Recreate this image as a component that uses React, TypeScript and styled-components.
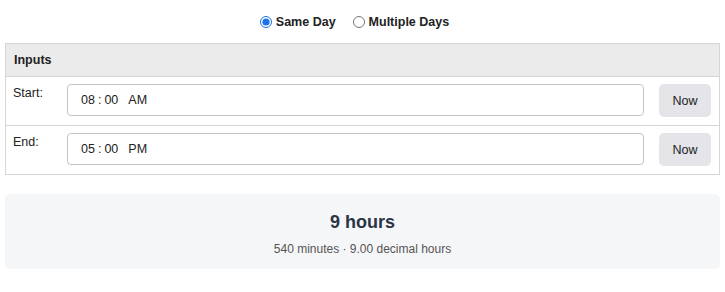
import { FC, useState } from "react";
import styled, { createGlobalStyle } from "styled-components";

const GlobalStyle = createGlobalStyle`
    body {
        margin: 0;
        background: #ffffff;
        font-family: "Liberation Sans", Arial, sans-serif;
        color: #222;
    }
`
const Page = styled.main`
    display: flex;
    flex-direction: column;
    padding: 0 5px 0 5px;
    width: 715px;
`
const ModeRow = styled.div`
    display: flex;
    justify-content: center;
    align-items: center;
    gap: 17px;
    height: 43px;
    padding-right: 16px;
`
const ModeLabel = styled.label`
    display: flex;
    align-items: center;
    gap: 4px;
    font-size: 12.5px;
    font-weight: bold;
    color: #222;
    cursor: pointer;

    input {
        margin: 0;
        width: 12px;
        height: 12px;
        accent-color: #1a73e8;
    }
`
const Table = styled.div`
    display: flex;
    flex-direction: column;
    border: 1px solid #d6d6d6;
`
const HeaderRow = styled.div`
    display: flex;
    align-items: center;
    height: 32px;
    padding-left: 8px;
    background-color: #ebebeb;
    border-bottom: 1px solid #d6d6d6;
    font-size: 12.5px;
    font-weight: bold;
    color: #222;
`
const Row = styled.div<{ $last?: boolean }>`
    display: grid;
    grid-template-columns: 53px 1fr 68px;
    height: 48px;
    border-bottom: ${(p) => (p.$last ? "none" : "1px solid #d6d6d6")};
`
const RowLabel = styled.div`
    padding: 9px 0 0 7px;
    font-size: 12.5px;
    color: #222;
`
const InputCell = styled.div`
    padding: 7px 7px 0 8px;
`
const TimeBox = styled.div`
    display: flex;
    align-items: center;
    height: 32px;
    padding-left: 13px;
    border: 1px solid #c4c4c4;
    border-radius: 4px;
    background: #fff;
    font-size: 12.5px;
    color: #222;
    box-sizing: border-box;
`
const Colon = styled.span`
    padding: 0 3px;
`
const Meridiem = styled.span`
    margin-left: 10px;
`
const ButtonCell = styled.div`
    padding: 7px 0 0 8px;
`
const NowButton = styled.button`
    width: 52px;
    height: 33px;
    border: none;
    border-radius: 5px;
    background-color: #e4e4e9;
    font-family: "Liberation Sans", Arial, sans-serif;
    font-size: 12.5px;
    color: #222;
    cursor: pointer;
`
const Result = styled.section`
    display: flex;
    flex-direction: column;
    align-items: center;
    margin-top: 19px;
    height: 75px;
    border-radius: 5px;
    background-color: #f5f6f8;
    box-sizing: border-box;
    padding-top: 18px;
`
const ResultMain = styled.div`
    font-size: 18px;
    font-weight: bold;
    color: #2b3445;
`
const ResultSub = styled.div`
    margin-top: 9px;
    font-size: 12px;
    color: #555;
`

const times = [
    { label: "Start:", hh: "08", mm: "00", ap: "AM" },
    { label: "End:", hh: "05", mm: "00", ap: "PM" },
];

const App: FC = () => {
    const [mode, setMode] = useState<string>("same");

    return (
        <Page>
            <GlobalStyle />
            <ModeRow>
                <ModeLabel>
                    <input type="radio" name="mode" checked={mode === "same"} onChange={() => setMode("same")} />
                    Same Day
                </ModeLabel>
                <ModeLabel>
                    <input type="radio" name="mode" checked={mode === "multi"} onChange={() => setMode("multi")} />
                    Multiple Days
                </ModeLabel>
            </ModeRow>

            <Table>
                <HeaderRow>Inputs</HeaderRow>
                {times.map((t, i) => (
                    <Row key={t.label} $last={i === times.length - 1}>
                        <RowLabel>{t.label}</RowLabel>
                        <InputCell>
                            <TimeBox>
                                {t.hh}<Colon>:</Colon>{t.mm}<Meridiem>{t.ap}</Meridiem>
                            </TimeBox>
                        </InputCell>
                        <ButtonCell>
                            <NowButton>Now</NowButton>
                        </ButtonCell>
                    </Row>
                ))}
            </Table>

            <Result>
                <ResultMain>9 hours</ResultMain>
                <ResultSub>540 minutes · 9.00 decimal hours</ResultSub>
            </Result>
        </Page>
    )
}

export default App;
